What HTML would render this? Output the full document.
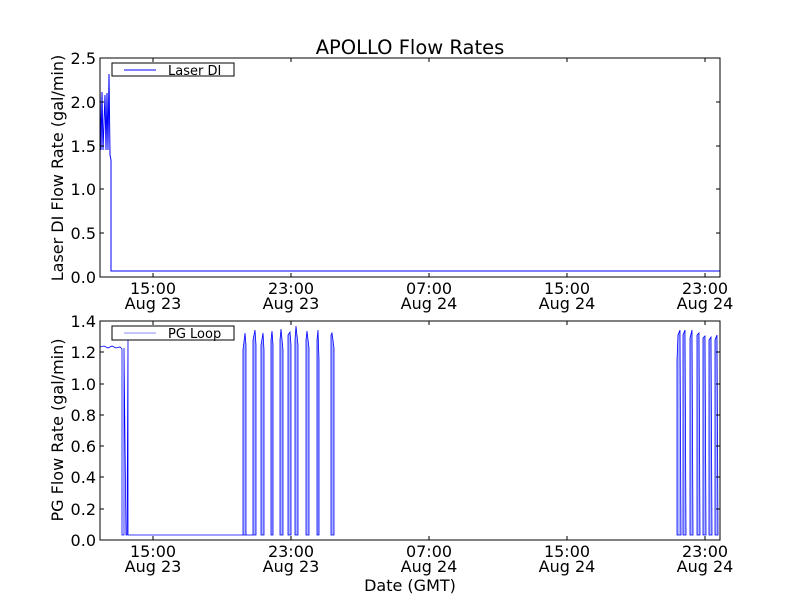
<!DOCTYPE html>
<html><head><style>
html,body{margin:0;padding:0;background:#fff;}
svg{display:block;font-family:"DejaVu Sans","Liberation Sans",sans-serif;}
</style></head><body>
<svg width="800" height="600" viewBox="0 0 800 600" xmlns="http://www.w3.org/2000/svg">
<rect width="800" height="600" fill="#fff"/>
<text x="410" y="54" font-size="19.5" text-anchor="middle">APOLLO Flow Rates</text>

<!-- TOP AXES -->
<g>
<polyline fill="none" stroke="#0000ff" stroke-width="1" points="100,150 100,90 101,150 102,92 103,150 105,95 106,150 107,93 108,150 109,74 110,155 111,160 111,271 720,271"/>
<rect x="100" y="58" width="620" height="219" fill="none" stroke="#000" stroke-width="1"/>
<g stroke="#000" stroke-width="1">
<line x1="100" y1="58" x2="104" y2="58"/><line x1="100" y1="102" x2="104" y2="102"/><line x1="100" y1="146" x2="104" y2="146"/><line x1="100" y1="189" x2="104" y2="189"/><line x1="100" y1="233" x2="104" y2="233"/>
<line x1="720" y1="58" x2="716" y2="58"/><line x1="720" y1="102" x2="716" y2="102"/><line x1="720" y1="146" x2="716" y2="146"/><line x1="720" y1="189" x2="716" y2="189"/><line x1="720" y1="233" x2="716" y2="233"/>
<line x1="153" y1="277" x2="153" y2="273"/><line x1="291" y1="277" x2="291" y2="273"/><line x1="429" y1="277" x2="429" y2="273"/><line x1="567" y1="277" x2="567" y2="273"/><line x1="705" y1="277" x2="705" y2="273"/>
<line x1="153" y1="58" x2="153" y2="62"/><line x1="291" y1="58" x2="291" y2="62"/><line x1="429" y1="58" x2="429" y2="62"/><line x1="567" y1="58" x2="567" y2="62"/><line x1="705" y1="58" x2="705" y2="62"/>
</g>
<g font-size="16" text-anchor="end">
<text x="96" y="64">2.5</text><text x="96" y="108">2.0</text><text x="96" y="152">1.5</text><text x="96" y="195">1.0</text><text x="96" y="239">0.5</text><text x="96" y="283">0.0</text>
</g>
<g font-size="16" text-anchor="middle">
<text x="153" y="294">15:00</text><text x="153" y="309">Aug 23</text>
<text x="291" y="294">23:00</text><text x="291" y="309">Aug 23</text>
<text x="429" y="294">07:00</text><text x="429" y="309">Aug 24</text>
<text x="567" y="294">15:00</text><text x="567" y="309">Aug 24</text>
<text x="705" y="294">23:00</text><text x="705" y="309">Aug 24</text>
</g>
<text transform="translate(63,168) rotate(-90)" font-size="16" text-anchor="middle">Laser DI Flow Rate (gal/min)</text>
<rect x="112" y="63" width="122" height="13" fill="#fff" stroke="#000" stroke-width="1"/>
<line x1="124" y1="70" x2="156" y2="70" stroke="#0000ff" stroke-width="1"/>
<text x="168" y="75" font-size="13">Laser DI</text>
</g>

<!-- BOTTOM AXES -->
<g>
<g fill="#aab4ff" stroke="#0000ff" stroke-width="0.8">
<polyline fill="none" points="100,347 104,346 108,348 112,346 116,348 120,347 122,349 122,535 124,535 124,348 126,535 127,535 128,340 128,535 243,535"/>
<path d="M243,535 L243,350 L245,333 L246,345 L246,535 Z"/>
<path d="M253,535 L253,340 L255,330 L256,345 L256,535 Z"/>
<path d="M261,535 L261,345 L263,333 L264,350 L264,535 Z"/>
<path d="M271,535 L271,340 L272,331 L273,345 L273,535 Z"/>
<path d="M280,535 L280,340 L281,329 L283,350 L283,535 Z"/>
<path d="M288,535 L288,335 L290,332 L291,345 L291,535 Z"/>
<path d="M295,535 L295,340 L296,326 L298,345 L298,535 Z"/>
<path d="M306,535 L306,340 L307,331 L309,348 L309,535 Z"/>
<path d="M317,535 L317,340 L318,330 L319,360 L319,535 Z"/>
<path d="M331,535 L331,335 L332,333 L334,348 L334,535 Z"/>
<polyline fill="none" points="246,535 253,535 M256,535 261,535 M334,535 677,535"/>
<path d="M677,535 L677,360 L678,335 L680,330 L681,535 Z"/>
<path d="M683,535 L683,335 L685,330 L686,535 Z"/>
<path d="M690,535 L690,338 L692,330 L693,535 Z"/>
<path d="M697,535 L697,335 L699,333 L700,535 Z"/>
<path d="M703,535 L703,338 L705,336 L706,535 Z"/>
<path d="M709,535 L709,340 L711,337 L712,535 Z"/>
<path d="M715,535 L715,340 L717,335 L718,535 Z"/>
</g>
<rect x="100" y="321" width="620" height="219" fill="none" stroke="#000" stroke-width="1"/>
<g stroke="#000" stroke-width="1">
<line x1="100" y1="321" x2="104" y2="321"/><line x1="100" y1="352" x2="104" y2="352"/><line x1="100" y1="384" x2="104" y2="384"/><line x1="100" y1="415" x2="104" y2="415"/><line x1="100" y1="446" x2="104" y2="446"/><line x1="100" y1="477" x2="104" y2="477"/><line x1="100" y1="509" x2="104" y2="509"/>
<line x1="720" y1="352" x2="716" y2="352"/><line x1="720" y1="384" x2="716" y2="384"/><line x1="720" y1="415" x2="716" y2="415"/><line x1="720" y1="446" x2="716" y2="446"/><line x1="720" y1="477" x2="716" y2="477"/><line x1="720" y1="509" x2="716" y2="509"/>
<line x1="153" y1="540" x2="153" y2="536"/><line x1="291" y1="540" x2="291" y2="536"/><line x1="429" y1="540" x2="429" y2="536"/><line x1="567" y1="540" x2="567" y2="536"/><line x1="705" y1="540" x2="705" y2="536"/>
<line x1="153" y1="321" x2="153" y2="325"/><line x1="291" y1="321" x2="291" y2="325"/><line x1="429" y1="321" x2="429" y2="325"/><line x1="567" y1="321" x2="567" y2="325"/><line x1="705" y1="321" x2="705" y2="325"/>
</g>
<g font-size="16" text-anchor="end">
<text x="96" y="327">1.4</text><text x="96" y="358">1.2</text><text x="96" y="390">1.0</text><text x="96" y="421">0.8</text><text x="96" y="452">0.6</text><text x="96" y="483">0.4</text><text x="96" y="515">0.2</text><text x="96" y="546">0.0</text>
</g>
<g font-size="16" text-anchor="middle">
<text x="153" y="557">15:00</text><text x="153" y="572">Aug 23</text>
<text x="291" y="557">23:00</text><text x="291" y="572">Aug 23</text>
<text x="429" y="557">07:00</text><text x="429" y="572">Aug 24</text>
<text x="567" y="557">15:00</text><text x="567" y="572">Aug 24</text>
<text x="705" y="557">23:00</text><text x="705" y="572">Aug 24</text>
</g>
<text x="410" y="591" font-size="16" text-anchor="middle">Date (GMT)</text>
<text transform="translate(63,430) rotate(-90)" font-size="16" text-anchor="middle">PG Flow Rate (gal/min)</text>
<rect x="112" y="326" width="122" height="14" fill="#fff" stroke="#000" stroke-width="1"/>
<line x1="124" y1="333" x2="156" y2="333" stroke="#8c8cff" stroke-width="1"/>
<text x="168" y="338" font-size="13">PG Loop</text>
</g>
</svg>
</body></html>
